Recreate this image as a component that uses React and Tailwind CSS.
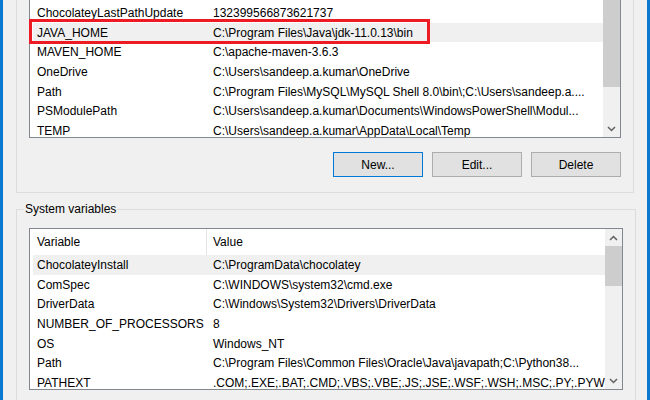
import clsx from "clsx";

const userRows = [
  ["ChocolateyLastPathUpdate", "132399566873621737"],
  ["JAVA_HOME", "C:\\Program Files\\Java\\jdk-11.0.13\\bin", true],
  ["MAVEN_HOME", "C:\\apache-maven-3.6.3"],
  ["OneDrive", "C:\\Users\\sandeep.a.kumar\\OneDrive"],
  ["Path", "C:\\Program Files\\MySQL\\MySQL Shell 8.0\\bin\\;C:\\Users\\sandeep.a...."],
  ["PSModulePath", "C:\\Users\\sandeep.a.kumar\\Documents\\WindowsPowerShell\\Modul..."],
  ["TEMP", "C:\\Users\\sandeep.a.kumar\\AppData\\Local\\Temp"],
];

const systemRows = [
  ["ChocolateyInstall", "C:\\ProgramData\\chocolatey", true],
  ["ComSpec", "C:\\WINDOWS\\system32\\cmd.exe"],
  ["DriverData", "C:\\Windows\\System32\\Drivers\\DriverData"],
  ["NUMBER_OF_PROCESSORS", "8"],
  ["OS", "Windows_NT"],
  ["Path", "C:\\Program Files\\Common Files\\Oracle\\Java\\javapath;C:\\Python38..."],
  ["PATHEXT", ".COM;.EXE;.BAT;.CMD;.VBS;.VBE;.JS;.JSE;.WSF;.WSH;.MSC;.PY;.PYW"],
];

const Chevron = ({ up }) => (
  <svg width="9" height="6" viewBox="0 0 9 6">
    <path
      d={up ? "M1 5 L4.5 1.5 L8 5" : "M1 1 L4.5 4.5 L8 1"}
      stroke="#606060"
      strokeWidth="1.5"
      fill="none"
    />
  </svg>
);

const Row = ({ name, value, active }) => (
  <div className={clsx("flex h-[19.7px] items-center whitespace-nowrap", active && "bg-[#f0f0f0]")}>
    <div className="w-[174px] shrink-0 pl-[4px]">{name}</div>
    <div className="min-w-0 flex-1 overflow-hidden pl-[6px]">{value}</div>
  </div>
);

const Button = ({ children, primary }) => (
  <button
    className={clsx(
      "h-[25px] w-[90px] bg-[#e1e1e1] text-black",
      primary ? "border-[1.5px] border-[#0078d7]" : "border border-[#adadad]"
    )}
  >
    {children}
  </button>
);

export default function App() {
  return (
    <div
      className="flex h-[400px] w-[650px] flex-col overflow-hidden border-x-[3px] border-[#0b79d0] bg-[#f0f0f0] pl-[13px] pr-[13px] text-[12px] text-black"
      style={{ fontFamily: '"Liberation Sans", Arial, sans-serif' }}
    >
      {/* User variables group (top edge scrolled out of view) */}
      <div className="border-x border-b border-[#dcdcdc] px-[12px] pb-[15px]">
        <div className="relative flex h-[138px] border-x border-b border-[#828790] bg-white">
          <div className="min-w-0 flex-1 overflow-hidden pl-[3px] pt-[3px]">
            {userRows.map(([n, v, a]) => (
              <Row key={n} name={n} value={v} active={a} />
            ))}
          </div>
          <div className="flex w-[17px] flex-col bg-[#f0f0f0]">
            <div className="h-[87px] bg-[#cdcdcd]" />
            <div className="flex-1" />
            <div className="flex h-[17px] items-center justify-center">
              <Chevron />
            </div>
          </div>
          <div className="absolute left-[-1px] top-[19px] h-[25px] w-[401px] border-[3px] border-[#ed1c24]" />
        </div>
        <div className="mt-[14px] flex justify-end gap-[9px]">
          <Button primary>New...</Button>
          <Button>Edit...</Button>
          <Button>Delete</Button>
        </div>
      </div>

      {/* System variables group */}
      <fieldset className="mt-[8px] border border-[#dcdcdc] pb-[20px]">
        <legend className="ml-[7px] px-[1px] leading-[16px]">System variables</legend>
        <div className="px-[12px] pt-[11px]">
          <div className="flex h-[162px] border border-[#828790] bg-white">
            <div className="min-w-0 flex-1 overflow-hidden pl-[3px]">
              <div className="flex h-[26px] items-center">
                <div className="flex h-full w-[174px] items-center border-r border-[#e5e5e5] pl-[4px]">Variable</div>
                <div className="pl-[6px]">Value</div>
              </div>
              {systemRows.map(([n, v, a]) => (
                <Row key={n} name={n} value={v} active={a} />
              ))}
            </div>
            <div className="flex w-[17px] flex-col bg-[#f0f0f0]">
              <div className="flex h-[17px] items-center justify-center">
                <Chevron up />
              </div>
              <div className="h-[40px] bg-[#cdcdcd]" />
              <div className="flex-1" />
              <div className="flex h-[17px] items-center justify-center">
                <Chevron />
              </div>
            </div>
          </div>
        </div>
      </fieldset>
    </div>
  );
}
